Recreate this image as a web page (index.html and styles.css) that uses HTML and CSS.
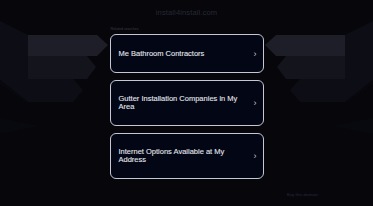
FILE: index.html
```html
<!DOCTYPE html>
<html lang="en">
<head>
    <meta charset="UTF-8">
    <meta name="viewport" content="width=device-width, initial-scale=1.0">
    <title>install4install.com</title>
    <link rel="stylesheet" href="styles.css">
</head>
<body>

<svg class="backdrop" width="373" height="206" viewBox="0 0 373 206" aria-hidden="true">
    <!-- left ribbon -->
    <polygon points="0,21 28,35 28,102 0,80" fill="#0c0d15"/>
    <polygon points="0,80 28,102 28,104 0,84" fill="#08080e"/>
    <polygon points="28,35 97,35 108,45 97,56 28,56" fill="#1d1e27"/>
    <polygon points="28,56 87,56 96,67 87,79 28,79" fill="#13141c"/>
    <polygon points="28,79 73,79 83,90 73,102 28,102" fill="#0d0e15"/>
    <polygon points="0,118 40,126 0,134" fill="#08090e"/>
    <!-- right ribbon -->
    <polygon points="373,21 345,35 345,102 373,80" fill="#0c0d15"/>
    <polygon points="373,80 345,102 345,104 373,84" fill="#08080e"/>
    <polygon points="345,35 276,35 265,45 276,56 345,56" fill="#1d1e27"/>
    <polygon points="345,56 286,56 277,67 286,79 345,79" fill="#13141c"/>
    <polygon points="345,79 300,79 290,90 300,102 345,102" fill="#0d0e15"/>
    <polygon points="373,118 333,126 373,134" fill="#08090e"/>
</svg>

<div class="page">
    <h1 class="domain">install4install.com</h1>

    <div class="results">
        <p class="label">Related searches</p>
        <a class="result short" href="#">
            <span class="title">Me Bathroom Contractors</span>
            <span class="chev">&#8250;</span>
        </a>
        <a class="result" href="#">
            <span class="title">Gutter Installation Companies in My Area</span>
            <span class="chev">&#8250;</span>
        </a>
        <a class="result" href="#">
            <span class="title">Internet Options Available at My Address</span>
            <span class="chev">&#8250;</span>
        </a>
    </div>

    <div class="footer">
        <a href="#">Buy this domain</a>
    </div>
</div>

</body>
</html>
```

FILE: styles.css
```css
body {
    margin: 0;
    background-color: #06060b;
    font-family: "Liberation Sans", Arial, sans-serif;
    width: 373px;
    height: 206px;
    overflow: hidden;
    position: relative;
}

.backdrop {
    position: absolute;
    left: 0;
    top: 0;
    z-index: 0;
}

.page {
    position: relative;
    z-index: 1;
    display: flex;
    flex-direction: column;
    align-items: center;
}

.domain {
    margin: 8px 0 0;
    font-size: 7.6px;
    line-height: 10px;
    font-weight: normal;
    color: #272833;
    letter-spacing: 0.1px;
}

.results {
    width: 154px;
    margin-top: 9px;
    display: flex;
    flex-direction: column;
    gap: 7px;
}

.label {
    margin: 0 0 -5px 1px;
    font-size: 3.6px;
    line-height: 5px;
    color: #3c3d4c;
}

.result {
    box-sizing: border-box;
    height: 46px;
    display: flex;
    align-items: center;
    justify-content: space-between;
    padding: 0 6px 0 8px;
    background: #030615;
    border: 1.5px solid #c5c8d3;
    border-radius: 6px;
    color: #e4e6ee;
    text-decoration: none;
    font-size: 7.5px;
    line-height: 8px;
}

.result.short {
    height: 39px;
}

.title {
    max-width: 128px;
    -webkit-text-stroke: 0.1px #e4e6ee;
}

.chev {
    font-size: 9px;
    color: #c9ccd6;
}

.footer {
    align-self: stretch;
    text-align: right;
    padding-right: 55px;
    margin-top: 13px;
    font-size: 4.4px;
    line-height: 6px;
}

.footer a {
    color: #262840;
    text-decoration: none;
}
```
